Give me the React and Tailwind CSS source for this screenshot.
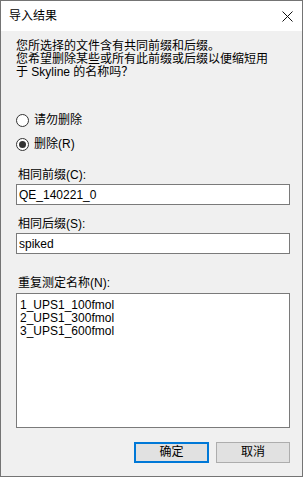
import { useState } from 'react';

const font = { fontFamily: '"Liberation Sans", "Noto Sans CJK SC", sans-serif' };

function Radio({ checked, label, onClick }) {
    return (
        <div className="flex items-center h-[13px] cursor-default" onClick={onClick}>
            <span className="w-[13px] h-[13px] rounded-full border border-[#333] bg-white flex items-center justify-center">
                {checked && <span className="w-[7px] h-[7px] rounded-full bg-[#333]" />}
            </span>
            <span className="ml-[5px] text-[12px] leading-[13px] text-black">{label}</span>
        </div>
    );
}

export default function App() {
    const [remove, setRemove] = useState(true);
    const [prefix, setPrefix] = useState('QE_140221_0');
    const [suffix, setSuffix] = useState('spiked');

    const replicates = ['1_UPS1_100fmol', '2_UPS1_300fmol', '3_UPS1_600fmol'];

    return (
        <div style={font} className="w-[303px] h-[477px] border border-[#747474] flex flex-col bg-[#f0f0f0] text-black">
            {/* Title bar */}
            <div className="h-[30px] bg-white flex items-center justify-between pl-[8px] pr-[9px] shrink-0">
                <span className="text-[12px] leading-[13px] mt-[1px]">导入结果</span>
                <svg width="11" height="11" viewBox="0 0 11 11" className="mt-[1px]">
                    <path d="M0.5 0.5 L10.5 10.5 M10.5 0.5 L0.5 10.5" stroke="#111" strokeWidth="1" />
                </svg>
            </div>

            {/* Content */}
            <div className="flex-1 flex flex-col pl-[15px] pr-[12px] text-[12px] leading-[13px]">
                <p className="pt-[9px]">
                    您所选择的文件含有共同前缀和后缀。<br />
                    您希望删除某些或所有此前缀或后缀以便缩短用<br />
                    于 Skyline 的名称吗？
                </p>

                <div className="mt-[35px] flex flex-col gap-[11px]">
                    <Radio checked={!remove} label="请勿删除" onClick={() => setRemove(false)} />
                    <Radio checked={remove} label="删除(R)" onClick={() => setRemove(true)} />
                </div>

                <label className="mt-[18px] ml-[2px]">相同前缀(C):</label>
                <input
                    value={prefix}
                    onChange={e => setPrefix(e.target.value)}
                    className="mt-[2px] w-full h-[21px] border border-[#7a7a7a] bg-white px-[2px] text-[12px] outline-none"
                />

                <label className="mt-[13px] ml-[2px]">相同后缀(S):</label>
                <input
                    value={suffix}
                    onChange={e => setSuffix(e.target.value)}
                    className="mt-[2px] w-full h-[21px] border border-[#7a7a7a] bg-white px-[2px] text-[12px] outline-none"
                />

                <label className="mt-[23px] ml-[2px]">重复测定名称(N):</label>
                <div className="mt-[3px] w-full h-[135px] border border-[#7a7a7a] bg-white px-[3px] pt-[5px]">
                    {replicates.map(r => (
                        <div key={r} className="leading-[13px]">{r}</div>
                    ))}
                </div>

                <div className="mt-[14px] flex justify-end gap-[7px]">
                    <button className="w-[75px] h-[21px] border-2 border-[#0078d7] bg-[#e1e1e1] text-[12px] leading-[13px]">
                        确定
                    </button>
                    <button className="w-[74px] h-[21px] border border-[#adadad] bg-[#e1e1e1] text-[12px] leading-[13px]">
                        取消
                    </button>
                </div>
            </div>
        </div>
    );
}
